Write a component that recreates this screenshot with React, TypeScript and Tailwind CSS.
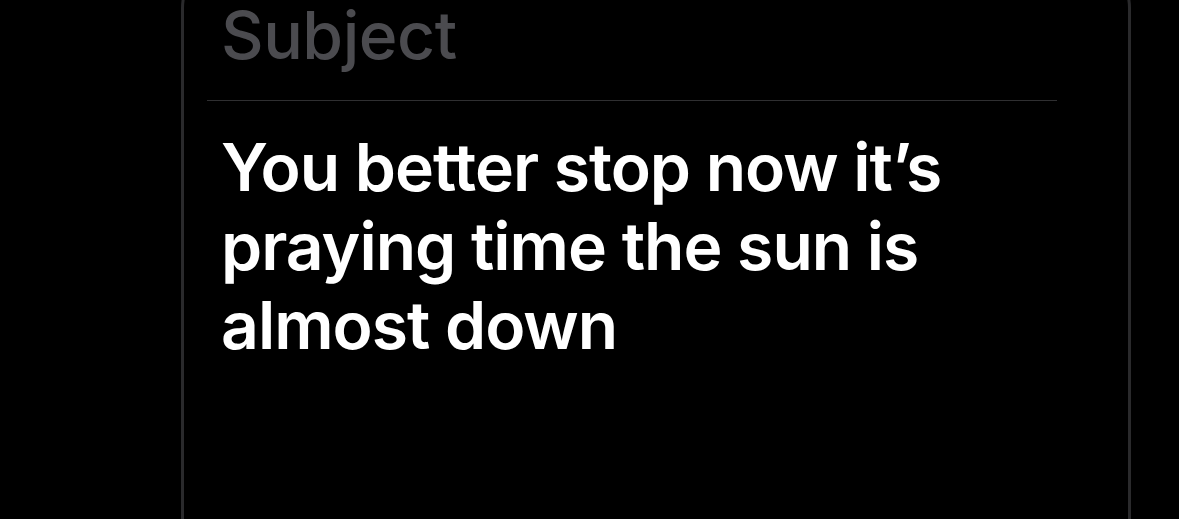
export default function App() {
  return (
    <div
      className="w-[1179px] h-[519px] bg-black overflow-hidden"
      style={{ fontFamily: 'Inter, "Liberation Sans", sans-serif' }}
    >
      <div className="ml-[181px] mt-[-40px] w-[950px] h-[620px] rounded-[48px] border-[3px] border-[#2a2a2c] bg-black">
        <div className="pl-[37px] pt-[32px] text-[66px] font-medium leading-[80px] tracking-[-0.5px] text-[#4b4b4f]">
          Subject
        </div>
        <div className="ml-[23px] mr-[71px] mt-[25px] h-px bg-[#2f2f31]" />
        <p className="pl-[37px] pr-[80px] pt-[27px] text-[66px] font-semibold leading-[79px] tracking-[-1px] text-white [font-feature-settings:'calt'_0,'liga'_0,'dlig'_0]">
          You better stop now it’s praying time the sun is almost down
        </p>
      </div>
    </div>
  );
}
